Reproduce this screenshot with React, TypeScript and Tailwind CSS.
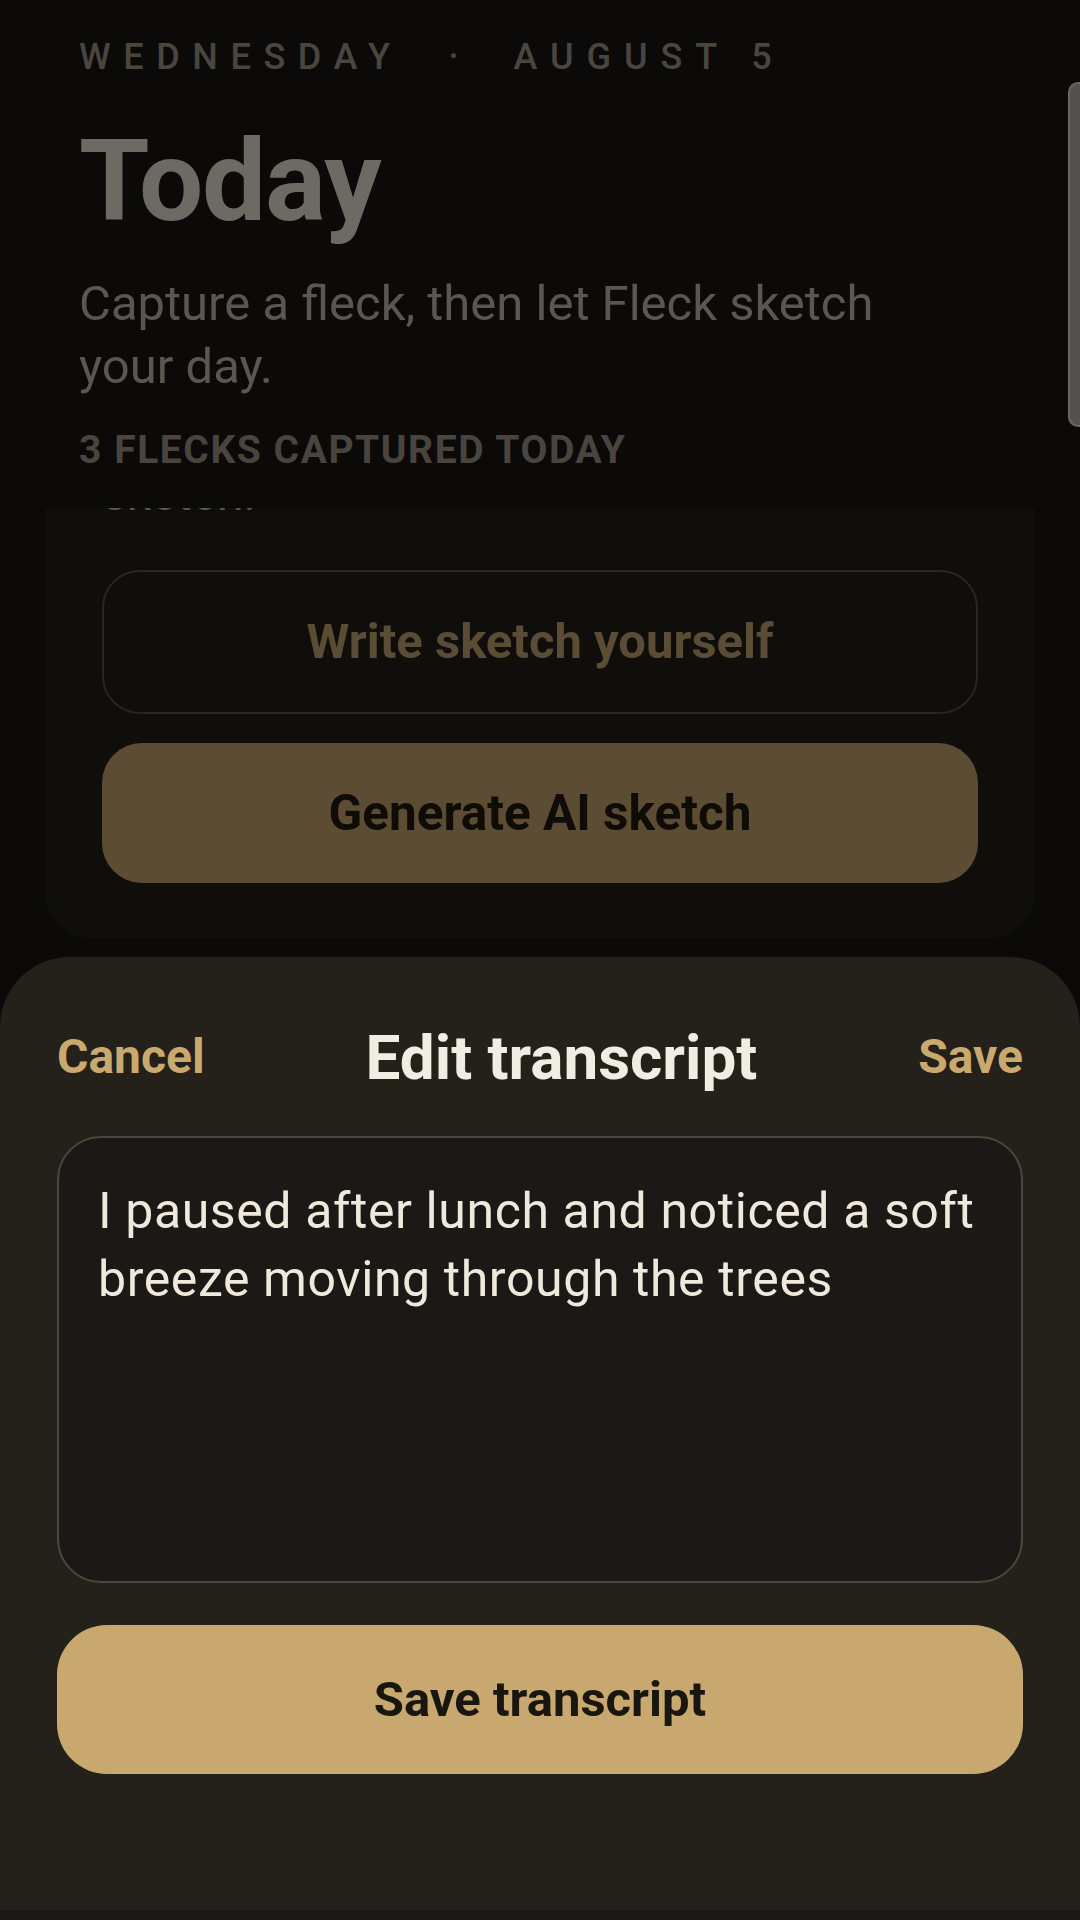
import React, { useState } from 'react';

const SketchCard: React.FC = () => (
  <div className="-mt-[46px] rounded-[45px] bg-[#0f0e0b] px-[57px] pb-[55px]">
    <p className="text-[48px] leading-[63px] text-[#5a5650]">sketch.</p>
    <button className="mt-[45px] flex h-[144px] w-full items-center justify-center rounded-[38px] border-2 border-[#2a2620] text-[49px] font-bold text-[#5b4d35]">
      Write sketch yourself
    </button>
    <button className="mt-[29px] flex h-[140px] w-full items-center justify-center rounded-[40px] bg-[#5c4c33] text-[49.5px] font-bold text-[#0f0c08]">
      Generate AI sketch
    </button>
  </div>
);

const EditSheet: React.FC = () => {
  const [text, setText] = useState(
    'I paused after lunch and noticed a soft breeze moving through the trees'
  );

  return (
    <div className="h-[953px] shrink-0 rounded-t-[70px] bg-[#24201a] px-[57px] pt-[64px]">
      <div className="flex h-[72px] items-center justify-between">
        <button className="text-[48px] font-bold text-[#c9a96d]">Cancel</button>
        <h2 className="text-[62px] font-bold text-[#f2ede3]">Edit transcript</h2>
        <button className="text-[48px] font-bold text-[#c9a96d]">Save</button>
      </div>
      <div className="mt-[43px] h-[447px] rounded-[44px] border-2 border-[#4f463a] bg-[#1b1815] px-[39px] pt-[39px]">
        <textarea
          value={text}
          onChange={(e) => setText(e.target.value)}
          className="h-full w-full resize-none overflow-hidden bg-transparent text-[50px] leading-[68px] tracking-[0.012em] text-[#efe9dc] outline-none"
        />
      </div>
      <button className="mt-[42px] flex h-[149px] w-full items-center justify-center rounded-[50px] bg-[#c8a86e] text-[49px] font-bold text-[#19150f]">
        Save transcript
      </button>
    </div>
  );
};

export default function App() {
  return (
    <div className="relative flex h-[1920px] w-[1080px] flex-col overflow-hidden bg-[#0b0a08] font-['Roboto','Noto_Sans',sans-serif]">
      <header className="shrink-0 px-[79px] pt-[33px]">
        <div className="flex items-center text-[36px] font-medium leading-[48px] tracking-[0.35em] text-[#4a463f]">
          <span>WEDNESDAY</span>
          <span className="ml-[46px]">·</span>
          <span className="ml-[42px] tracking-[0.36em]">AUGUST 5</span>
        </div>
        <h1 className="mt-[40px] text-[114px] font-bold leading-[120px] tracking-[-0.01em] text-[#6c6a63]">
          Today
        </h1>
        <p className="mt-[31px] max-w-[850px] text-[49px] leading-[63px] text-[#5b564f]">
          Capture a fleck, then let Fleck sketch your day.
        </p>
        <p className="mt-[28px] text-[39px] font-bold leading-[48px] tracking-[0.04em] text-[#49443e]">
          3 FLECKS CAPTURED TODAY
        </p>
      </header>

      <div className="mt-[34px] h-[449px] shrink-0 overflow-hidden px-[45px]">
        <SketchCard />
      </div>

      <EditSheet />
      <div className="h-[10px] shrink-0 bg-[#1b1916]" />

      <div className="absolute right-0 top-[82px] h-[345px] w-[12px] rounded-l-[10px] border-2 border-r-0 border-[#6a6865] bg-[#545250]" />
    </div>
  );
}
